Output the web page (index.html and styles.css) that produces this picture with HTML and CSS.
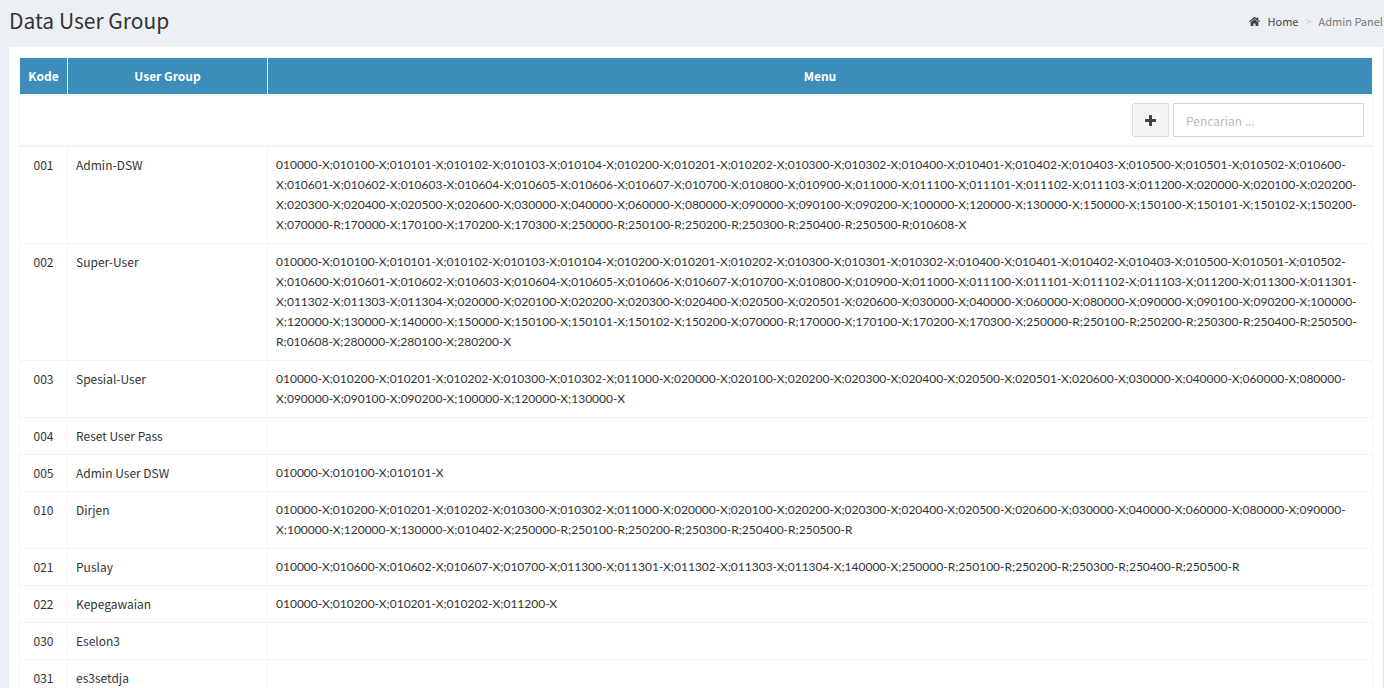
FILE: index.html
```html
<!DOCTYPE html>
<html lang="id">
<head>
<meta charset="utf-8">
<title>Data User Group</title>
<link rel="stylesheet" href="styles.css">
</head>
<body>
<header class="page-header">
  <h1 class="page-title">Data User Group</h1>
  <nav class="breadcrumb" aria-label="Breadcrumb">
    <a class="crumb-home" href="#"><svg class="icon-home" viewBox="0 0 22 18" aria-hidden="true"><path d="M11 4.200 3.200 10.600V17q0 1 1 1H9v-5h4v5h4.800q1 0 1-1v-6.400z"/><path d="M11 0q.8 0 1.400.5L15.500 3V1h3v4.500l3.300 2.800q.4.400 0 .8l-.7.800q-.4.400-.9 0L11 2.900 1.800 9.900q-.5.400-.9 0L.2 9.100q-.4-.4 0-.8L9.600.5Q10.200 0 11 0z"/></svg>Home</a>
    <span class="crumb-sep">&gt;</span>
    <span>Admin Panel</span>
  </nav>
</header>
<main class="box">
  <table class="grid">
    <colgroup><col class="col-kode"><col class="col-group"><col></colgroup>
    <thead>
      <tr><th>Kode</th><th>User Group</th><th>Menu</th></tr>
      <tr class="filter-row"><td colspan="3">
        <form class="tools">
          <button class="add" type="button" aria-label="Tambah"><svg class="icon-plus" viewBox="0 0 11 11" aria-hidden="true"><path d="M4.500 0h2q.5 0 .5.500V4h3.500q.5 0 .5.500v2q0 .5-.5.500H7v3.500q0 .5-.5.500h-2q-.5 0-.5-.5V7H.5Q0 7 0 6.500v-2Q0 4 .5 4H4V.5Q4 0 4.500 0z"/></svg></button>
          <input class="search" type="text" placeholder="Pencarian ..." aria-label="Pencarian">
        </form>
      </td></tr>
    </thead>
    <tbody>
      <tr><td>001</td><td>Admin-DSW</td><td>010000-X;010100-X;010101-X;010102-X;010103-X;010104-X;010200-X;010201-X;010202-X;010300-X;010302-X;010400-X;010401-X;010402-X;010403-X;010500-X;010501-X;010502-X;010600-X;010601-X;010602-X;010603-X;010604-X;010605-X;010606-X;010607-X;010700-X;010800-X;010900-X;011000-X;011100-X;011101-X;011102-X;011103-X;011200-X;020000-X;020100-X;020200-X;020300-X;020400-X;020500-X;020600-X;030000-X;040000-X;060000-X;080000-X;090000-X;090100-X;090200-X;100000-X;120000-X;130000-X;150000-X;150100-X;150101-X;150102-X;150200-X;070000-R;170000-X;170100-X;170200-X;170300-X;250000-R;250100-R;250200-R;250300-R;250400-R;250500-R;010608-X</td></tr>
      <tr><td>002</td><td>Super-User</td><td>010000-X;010100-X;010101-X;010102-X;010103-X;010104-X;010200-X;010201-X;010202-X;010300-X;010301-X;010302-X;010400-X;010401-X;010402-X;010403-X;010500-X;010501-X;010502-X;010600-X;010601-X;010602-X;010603-X;010604-X;010605-X;010606-X;010607-X;010700-X;010800-X;010900-X;011000-X;011100-X;011101-X;011102-X;011103-X;011200-X;011300-X;011301-X;011302-X;011303-X;011304-X;020000-X;020100-X;020200-X;020300-X;020400-X;020500-X;020501-X;020600-X;030000-X;040000-X;060000-X;080000-X;090000-X;090100-X;090200-X;100000-X;120000-X;130000-X;140000-X;150000-X;150100-X;150101-X;150102-X;150200-X;070000-R;170000-X;170100-X;170200-X;170300-X;250000-R;250100-R;250200-R;250300-R;250400-R;250500-R;010608-X;280000-X;280100-X;280200-X</td></tr>
      <tr><td>003</td><td>Spesial-User</td><td>010000-X;010200-X;010201-X;010202-X;010300-X;010302-X;011000-X;020000-X;020100-X;020200-X;020300-X;020400-X;020500-X;020501-X;020600-X;030000-X;040000-X;060000-X;080000-X;090000-X;090100-X;090200-X;100000-X;120000-X;130000-X</td></tr>
      <tr><td>004</td><td>Reset User Pass</td><td></td></tr>
      <tr><td>005</td><td>Admin User DSW</td><td>010000-X;010100-X;010101-X</td></tr>
      <tr><td>010</td><td>Dirjen</td><td>010000-X;010200-X;010201-X;010202-X;010300-X;010302-X;011000-X;020000-X;020100-X;020200-X;020300-X;020400-X;020500-X;020600-X;030000-X;040000-X;060000-X;080000-X;090000-X;100000-X;120000-X;130000-X;010402-X;250000-R;250100-R;250200-R;250300-R;250400-R;250500-R</td></tr>
      <tr><td>021</td><td>Puslay</td><td>010000-X;010600-X;010602-X;010607-X;010700-X;011300-X;011301-X;011302-X;011303-X;011304-X;140000-X;250000-R;250100-R;250200-R;250300-R;250400-R;250500-R</td></tr>
      <tr><td>022</td><td>Kepegawaian</td><td>010000-X;010200-X;010201-X;010202-X;011200-X</td></tr>
      <tr><td>030</td><td>Eselon3</td><td></td></tr>
      <tr><td>031</td><td>es3setdja</td><td></td></tr>
    </tbody>
  </table>
</main>
</body>
</html>
```

FILE: styles.css
```css
* { box-sizing: border-box; }
html { height: 100%; overflow: hidden; }
body {
  margin: 0;
  background: #ecf0f5;
  color: #333;
  font-family: "Noto Sans CJK SC", sans-serif;
  font-size: 12px;
  line-height: 20px;
}
.page-header {
  display: flex;
  justify-content: space-between;
  align-items: center;
  height: 47px;
  padding: 0 1px 8px 9px;
}
.page-title { margin: 0; font-size: 21px; font-weight: 400; line-height: 26px; }
.breadcrumb {
  display: flex;
  align-items: center;
  gap: 7px;
  padding-top: 3px;
  font-size: 11px;
  color: #777;
}
.crumb-home { display: flex; align-items: center; gap: 7px; color: #444; text-decoration: none; }
.crumb-sep { color: #ccc; }
.icon-home { width: 11px; height: 9px; fill: #444; }
.box {
  margin-left: 9px;
  padding: 10px;
  background: #fff;
  border-right: 1px solid #e4e7ea;
}
.grid { width: 100%; border-collapse: collapse; table-layout: fixed; }
.col-kode { width: 48px; }
.col-group { width: 200px; }
.grid th, .grid td { padding: 8px; border: 1px solid #f4f4f4; vertical-align: top; }
.grid th {
  background: #3c8dbc;
  color: #fff;
  font-weight: 700;
  border-bottom-width: 2px;
}
.grid .filter-row td { padding-top: 7px; border-bottom-width: 2px; }
.grid tbody td:first-child { text-align: center; }
.grid tbody td { height: 37px; }
.grid tbody td:last-child { font-family: Lato, sans-serif; }
.tools { display: flex; justify-content: flex-end; gap: 4px; margin: 0; }
.add {
  display: grid;
  place-items: center;
  width: 37px;
  height: 34px;
  padding: 0;
  background: #f4f4f4;
  border: 1px solid #ddd;
  border-radius: 3px 0 0 3px;
}
.icon-plus { width: 11px; height: 11px; fill: #444; }
.search {
  width: 191px;
  height: 34px;
  padding: 6px 12px;
  border: 1px solid #d2d6de;
  border-radius: 0;
  background: #fff;
  color: #555;
  font: inherit;
}
.search::placeholder { color: #bbb; opacity: 1; }
```
